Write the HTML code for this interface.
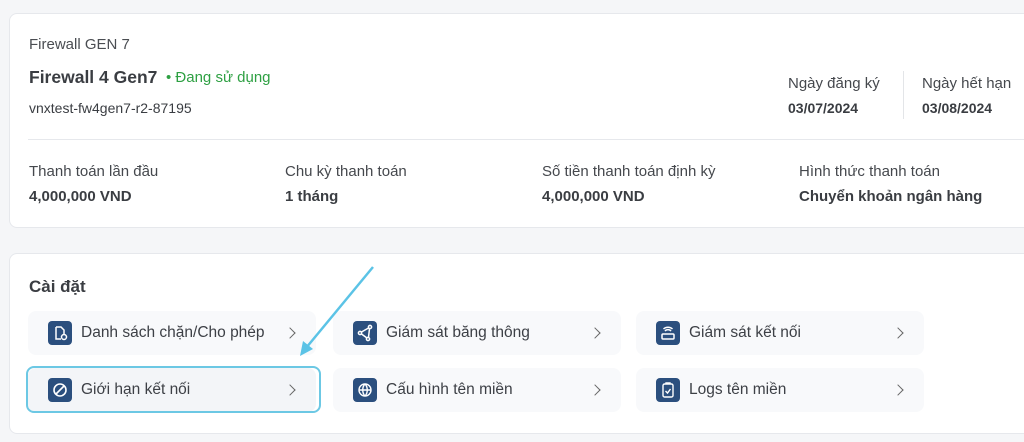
<!DOCTYPE html>
<html><head><meta charset="utf-8"><style>
*{margin:0;padding:0;box-sizing:border-box}
body{width:1024px;height:442px;background:#f5f6f8;font-family:"Liberation Sans",sans-serif;color:#3a3d42;position:relative;overflow:hidden}
.card{position:absolute;background:#fff;border:1px solid #e6e8ec;border-radius:8px}
.t{position:absolute;white-space:nowrap}
.lab{font-size:15px;color:#45484d}
.val{font-size:15px;font-weight:bold;color:#3a3d42}
.item{position:absolute;width:288px;height:44px;background:#f8f9fb;border-radius:8px}
.item .ic{position:absolute;left:20px;top:10px;width:24px;height:24px;background:#2b4f7e;border-radius:4px}
.item .tx{position:absolute;left:53px;top:13px;font-size:15.5px;color:#3d4046;white-space:nowrap}
.item .ch{position:absolute;right:22px;top:18px;width:8px;height:8px;border-right:1.3px solid #666;border-top:1.3px solid #666;transform:rotate(45deg)}
</style></head><body>
<div class="card" style="left:9px;top:13px;width:1030px;height:215px"></div>
<div class="t" style="left:29px;top:36px;font-size:15px;color:#4a4d52">Firewall GEN 7</div>
<div class="t" style="left:29px;top:67px;font-size:17.5px;font-weight:bold;color:#3a3d42">Firewall 4 Gen7</div>
<div class="t" style="left:166px;top:69px;font-size:15px;color:#2ea043">• Đang sử dụng</div>
<div class="t" style="left:29px;top:100px;font-size:14px;color:#3a3d42">vnxtest-fw4gen7-r2-87195</div>
<div class="t lab" style="left:788px;top:75px">Ngày đăng ký</div>
<div class="t val" style="left:788px;top:100px;font-size:14px">03/07/2024</div>
<div style="position:absolute;left:903px;top:71px;width:1px;height:48px;background:#e3e5e8"></div>
<div class="t lab" style="left:922px;top:75px">Ngày hết hạn</div>
<div class="t val" style="left:922px;top:100px;font-size:14px">03/08/2024</div>
<div style="position:absolute;left:28px;top:139px;width:996px;height:1px;background:#e6e8ec"></div>
<div class="t lab" style="left:29px;top:163px">Thanh toán lần đầu</div>
<div class="t val" style="left:29px;top:188px">4,000,000 VND</div>
<div class="t lab" style="left:285px;top:163px">Chu kỳ thanh toán</div>
<div class="t val" style="left:285px;top:188px">1 tháng</div>
<div class="t lab" style="left:542px;top:163px">Số tiền thanh toán định kỳ</div>
<div class="t val" style="left:542px;top:188px">4,000,000 VND</div>
<div class="t lab" style="left:799px;top:163px">Hình thức thanh toán</div>
<div class="t val" style="left:799px;top:188px">Chuyển khoản ngân hàng</div>

<div class="card" style="left:9px;top:253px;width:1030px;height:181px"></div>
<div class="t" style="left:29px;top:277px;font-size:17px;font-weight:bold;color:#3a3d42">Cài đặt</div>

<div class="item" style="left:28px;top:311px"><div class="ic"><svg width="24" height="24" viewBox="0 0 24 24" fill="none" stroke="#fff" stroke-width="1.5"><path d="M8 6h5l3 3v4M8 6v12h5"/><circle cx="16" cy="16" r="2.5"/></svg></div><div class="tx">Danh sách chặn/Cho phép</div><div class="ch"></div></div>
<div class="item" style="left:333px;top:311px"><div class="ic"><svg width="24" height="24" viewBox="0 0 24 24" fill="none" stroke="#fff" stroke-width="1.5"><circle cx="7" cy="12" r="1.6"/><circle cx="17" cy="6" r="1.6"/><circle cx="15" cy="18" r="1.6"/><path d="M8.5 11l7-4M8.5 13l5.5 4M16.5 7.5l-1 9"/></svg></div><div class="tx">Giám sát băng thông</div><div class="ch"></div></div>
<div class="item" style="left:636px;top:311px"><div class="ic"><svg width="24" height="24" viewBox="0 0 24 24" fill="none" stroke="#fff" stroke-width="1.5"><rect x="6" y="13" width="12" height="5" rx="1"/><path d="M9 10a4 4 0 0 1 6 0M7.5 8a6.5 6.5 0 0 1 9 0"/></svg></div><div class="tx">Giám sát kết nối</div><div class="ch"></div></div>

<div class="item" style="left:28px;top:368px;background:#f3f5f8"><div class="ic"><svg width="24" height="24" viewBox="0 0 24 24" fill="none" stroke="#fff" stroke-width="1.6"><circle cx="12" cy="12" r="6"/><path d="M8 16l8-8"/></svg></div><div class="tx">Giới hạn kết nối</div><div class="ch"></div></div>
<div style="position:absolute;left:26px;top:366px;width:295px;height:47px;border:2.5px solid #6cc8e4;border-radius:8px"></div>
<div class="item" style="left:333px;top:368px"><div class="ic"><svg width="24" height="24" viewBox="0 0 24 24" fill="none" stroke="#fff" stroke-width="1.4"><circle cx="12" cy="12" r="6"/><path d="M6 12h12M12 6c-3 3-3 9 0 12M12 6c3 3 3 9 0 12"/></svg></div><div class="tx">Cấu hình tên miền</div><div class="ch"></div></div>
<div class="item" style="left:636px;top:368px"><div class="ic"><svg width="24" height="24" viewBox="0 0 24 24" fill="none" stroke="#fff" stroke-width="1.4"><rect x="7" y="6" width="10" height="13" rx="1.5"/><path d="M10 6v-1h4v1M9.5 13l2 2 3-4"/></svg></div><div class="tx">Logs tên miền</div><div class="ch"></div></div>

<svg style="position:absolute;left:0;top:0" width="1024" height="442"><path d="M373 267L306 348" stroke="#5bc3e6" stroke-width="2.5" fill="none"/><path d="M300 356l3-15 10 8z" fill="#5bc3e6"/></svg>
</body></html>
